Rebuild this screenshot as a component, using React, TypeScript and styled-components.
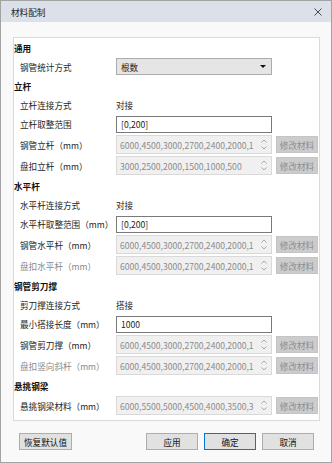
import React from "react";
import styled, { createGlobalStyle } from "styled-components";

const GlobalStyle = createGlobalStyle`
  html, body {
    margin: 0;
    padding: 0;
    background: #ffffff;
  }
  body {
    font-family: "Noto Sans CJK SC", "Noto Sans", sans-serif;
    font-size: 8.6px;
    color: #1e1e1e;
  }
`;

const Window = styled.div`
  width: 332px;
  height: 463px;
  box-sizing: border-box;
  border: 1px solid #a3a3a3;
  background: #f9f9f9;
  display: flex;
  flex-direction: column;
`;

const TitleBar = styled.div`
  height: 21px;
  flex: none;
  background: #dce1e9;
  display: flex;
  align-items: center;
  justify-content: space-between;
  padding: 0 9px 0 10px;
  color: #222;
`;

const CloseIcon = () => (
  <svg width="8" height="8" viewBox="0 0 8 8">
    <path d="M0.5 0.5 L7.5 7.5 M7.5 0.5 L0.5 7.5" stroke="#4a4a4a" strokeWidth="1" />
  </svg>
);

const Body = styled.div`
  flex: 1;
  display: flex;
  flex-direction: column;
  padding: 15px 11px 0 12px;
`;

const Panel = styled.div`
  border: 1px solid #dadada;
  background: #ffffff;
  height: 384px;
  box-sizing: border-box;
`;

const Header = styled.div`
  height: 19px;
  display: flex;
  align-items: center;
  font-weight: bold;
  color: #111;
`;

const Row = styled.div<{ $h?: number }>`
  height: ${(p) => p.$h ?? 19}px;
  display: flex;
  align-items: center;
`;

const Label = styled.div<{ $muted?: boolean }>`
  width: 96px;
  padding-left: 6px;
  flex: none;
  color: ${(p) => (p.$muted ? "#8a8a8a" : "#1e1e1e")};
  white-space: nowrap;
`;

const Value = styled.div`
  color: #1e1e1e;
`;

const Select = styled.div`
  width: 156px;
  height: 17px;
  box-sizing: border-box;
  border: 1px solid #acacac;
  background: #e5e5e5;
  display: flex;
  align-items: center;
  justify-content: space-between;
  padding: 0 5px 0 4px;
`;

const Caret = styled.span`
  width: 0;
  height: 0;
  border-left: 3px solid transparent;
  border-right: 3px solid transparent;
  border-top: 3px solid #111;
`;

const TextInput = styled.div`
  width: 156px;
  height: 17px;
  box-sizing: border-box;
  border: 1px solid #7a7a7a;
  background: #fff;
  display: flex;
  align-items: center;
  padding-left: 4px;
`;

const SpinBox = styled.div`
  width: 156px;
  height: 19px;
  box-sizing: border-box;
  border: 1px solid #d9d9d9;
  background: #f0f0f0;
  display: flex;
  align-items: center;
  color: #8c8c8c;
`;

const SpinText = styled.span`
  flex: 1;
  overflow: hidden;
  white-space: nowrap;
  padding-left: 3px;
`;

const SpinArrows = styled.span`
  width: 14px;
  flex: none;
  display: flex;
  flex-direction: column;
  align-items: center;
  gap: 3px;
`;

const ModifyButton = styled.div`
  margin-left: 4px;
  width: 42px;
  height: 17px;
  box-sizing: border-box;
  border: 1px solid #c4c4c4;
  background: #cccccc;
  color: #8e8e8e;
  display: flex;
  align-items: center;
  justify-content: center;
  white-space: nowrap;
`;

const Footer = styled.div`
  display: flex;
  align-items: center;
  justify-content: space-between;
  padding: 12px 6px 0 6px;
`;

const ButtonGroup = styled.div`
  display: flex;
  gap: 6px;
`;

const Button = styled.div<{ $primary?: boolean; $w?: number }>`
  width: ${(p) => p.$w ?? 52}px;
  height: 17px;
  box-sizing: border-box;
  border: 1px solid ${(p) => (p.$primary ? "#0078d7" : "#adadad")};
  background: #e1e1e1;
  display: flex;
  align-items: center;
  justify-content: center;
  color: #111;
`;

const Arrows = () => (
  <SpinArrows>
    <svg width="6" height="4" viewBox="0 0 6 4">
      <path d="M0.5 3.5 L3 1 L5.5 3.5" stroke="#a8a8a8" fill="none" strokeWidth="1" />
    </svg>
    <svg width="6" height="4" viewBox="0 0 6 4">
      <path d="M0.5 0.5 L3 3 L5.5 0.5" stroke="#a8a8a8" fill="none" strokeWidth="1" />
    </svg>
  </SpinArrows>
);

const SpinRow: React.FC<{ label: string; value: string; muted?: boolean }> = ({ label, value, muted }) => (
  <Row $h={21}>
    <Label $muted={muted}>{label}</Label>
    <SpinBox>
      <SpinText>{value}</SpinText>
      <Arrows />
    </SpinBox>
    <ModifyButton>修改材料</ModifyButton>
  </Row>
);

const TextRow: React.FC<{ label: string; value: string }> = ({ label, value }) => (
  <Row>
    <Label>{label}</Label>
    <Value>{value}</Value>
  </Row>
);

const InputRow: React.FC<{ label: string; value: string }> = ({ label, value }) => (
  <Row $h={20}>
    <Label>{label}</Label>
    <TextInput>{value}</TextInput>
  </Row>
);

const seq = "6000,4500,3000,2700,2400,2000,1";

export default function App() {
  return (
    <>
      <GlobalStyle />
      <Window>
        <TitleBar>
          <span>材料配制</span>
          <CloseIcon />
        </TitleBar>
        <Body>
          <Panel>
            <Header>通用</Header>
            <Row>
              <Label>钢管统计方式</Label>
              <Select>
                <span>根数</span>
                <Caret />
              </Select>
            </Row>

            <Header>立杆</Header>
            <TextRow label="立杆连接方式" value="对接" />
            <InputRow label="立杆取整范围" value="[0,200]" />
            <SpinRow label="钢管立杆（mm）" value={seq} />
            <SpinRow label="盘扣立杆（mm）" value="3000,2500,2000,1500,1000,500" />

            <Header>水平杆</Header>
            <TextRow label="水平杆连接方式" value="对接" />
            <InputRow label="水平杆取整范围（mm）" value="[0,200]" />
            <SpinRow label="钢管水平杆（mm）" value={seq} />
            <SpinRow label="盘扣水平杆（mm）" value={seq} muted />

            <Header>钢管剪刀撑</Header>
            <TextRow label="剪刀撑连接方式" value="搭接" />
            <InputRow label="最小搭接长度（mm）" value="1000" />
            <SpinRow label="钢管剪刀撑（mm）" value={seq} />
            <SpinRow label="盘扣竖向斜杆（mm）" value={seq} muted />

            <Header>悬挑钢梁</Header>
            <SpinRow label="悬挑钢梁材料（mm）" value="6000,5500,5000,4500,4000,3500,3" />
          </Panel>
          <Footer>
            <Button $w={53}>恢复默认值</Button>
            <ButtonGroup>
              <Button>应用</Button>
              <Button $primary>确定</Button>
              <Button>取消</Button>
            </ButtonGroup>
          </Footer>
        </Body>
      </Window>
    </>
  );
}
